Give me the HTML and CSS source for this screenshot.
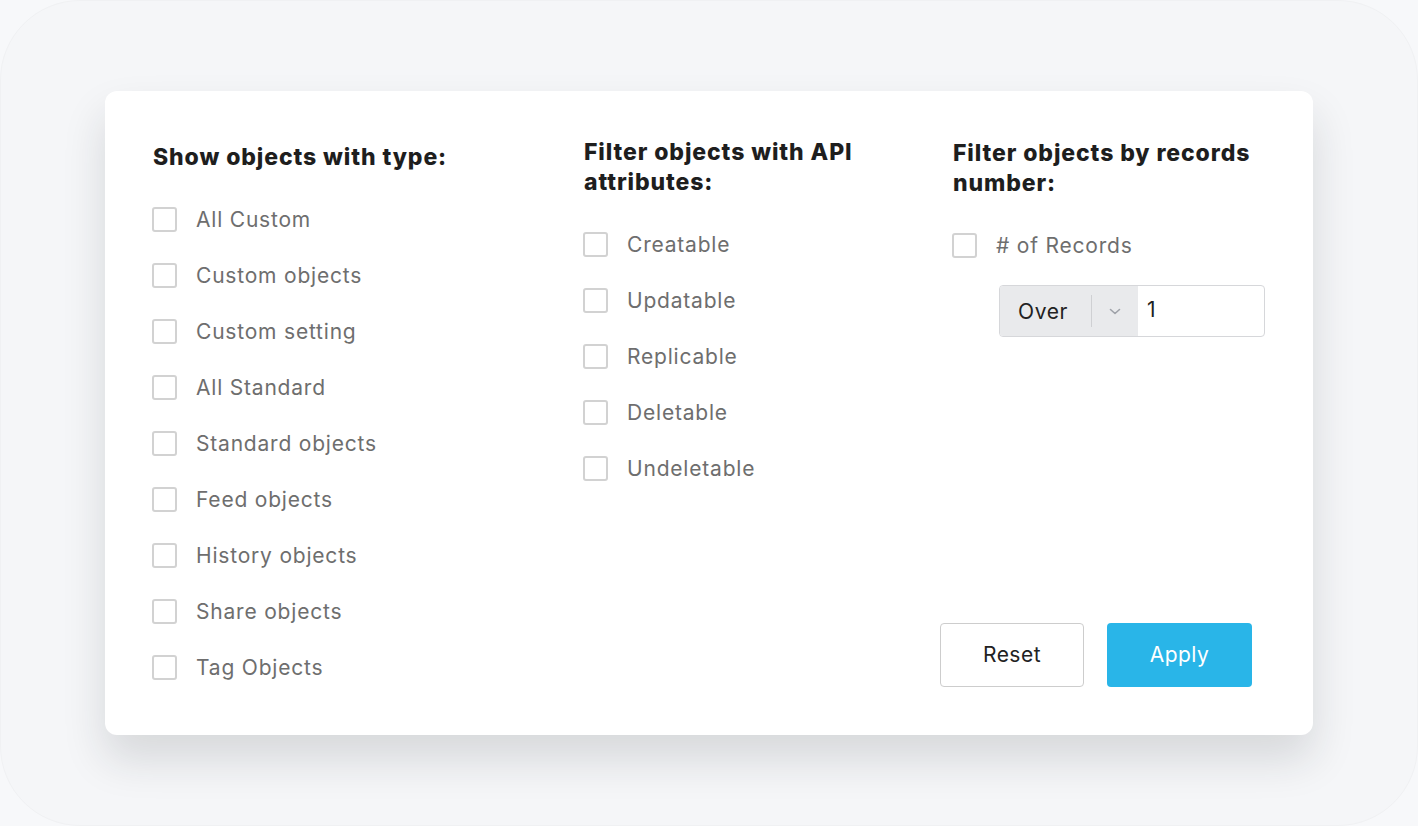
FILE: index.html
```html
<!DOCTYPE html>
<html lang="en">
<head>
  <meta charset="UTF-8" />
  <meta name="viewport" content="width=device-width, initial-scale=1.0" />
  <title>Object filters</title>
  <link rel="stylesheet" href="styles.css">
</head>
<body>
  <div class="frame">
    <div class="card">
      <div class="col col-type">
        <h3>Show objects with type:</h3>
        <ul class="checks">
          <li><span class="box"></span>All Custom</li>
          <li><span class="box"></span>Custom objects</li>
          <li><span class="box"></span>Custom setting</li>
          <li><span class="box"></span>All Standard</li>
          <li><span class="box"></span>Standard objects</li>
          <li><span class="box"></span>Feed objects</li>
          <li><span class="box"></span>History objects</li>
          <li><span class="box"></span>Share objects</li>
          <li><span class="box"></span>Tag Objects</li>
        </ul>
      </div>

      <div class="col col-api">
        <h3>Filter objects with API attributes:</h3>
        <ul class="checks">
          <li><span class="box"></span>Creatable</li>
          <li><span class="box"></span>Updatable</li>
          <li><span class="box"></span>Replicable</li>
          <li><span class="box"></span>Deletable</li>
          <li><span class="box"></span>Undeletable</li>
        </ul>
      </div>

      <div class="col col-records">
        <h3>Filter objects by records number:</h3>
        <ul class="checks">
          <li><span class="box"></span># of Records</li>
        </ul>
        <div class="range">
          <div class="range-op">
            <span class="op-text">Over</span>
            <span class="op-sep"></span>
            <svg class="op-caret" width="12" height="7" viewBox="0 0 12 7"><path d="M1.5 1.5l4.5 4 4.5-4" fill="none" stroke="#9fa2a9" stroke-width="1.6" stroke-linecap="round" stroke-linejoin="round"/></svg>
          </div>
          <div class="range-value">1</div>
        </div>
        <div class="actions">
          <button class="btn btn-reset">Reset</button>
          <button class="btn btn-apply">Apply</button>
        </div>
      </div>
    </div>
  </div>
</body>
</html>
```

FILE: styles.css
```css
* { box-sizing: border-box; }
body {
  margin: 0;
  background: #f7f8fa;
  font-family: Inter, "Open Sans", sans-serif;
  color: #1e1e1e;
}
.frame {
  width: 1418px;
  height: 826px;
  background: #f5f6f8;
  border: 1px solid #f0f1f3;
  border-radius: 80px;
  display: flex;
  align-items: center;
  justify-content: center;
}
.card {
  width: 1208px;
  height: 644px;
  background: #fff;
  border-radius: 12px;
  box-shadow: 0 24px 44px rgba(30, 32, 40, 0.14);
  padding: 46px 48px 48px;
  display: grid;
  grid-template-columns: 431px 369px 1fr;
}
.col { display: flex; flex-direction: column; }
.col-type { padding-top: 5px; }
.col-records { padding-top: 1px; }
h3 {
  margin: 0;
  font-size: 23px;
  line-height: 30px;
  font-weight: 800;
  letter-spacing: 0.9px;
}
.col-api h3 { width: 300px; }
.checks {
  list-style: none;
  margin: 31px 0 0;
  padding: 0;
  display: flex;
  flex-direction: column;
  gap: 24px;
}
.checks li {
  height: 32px;
  display: flex;
  align-items: center;
  gap: 19px;
  font-size: 21px;
  letter-spacing: 0.8px;
  color: #6e6e6e;
}
.box {
  width: 25px;
  height: 25px;
  margin-left: -1px;
  border: 2px solid #d2d2d2;
  border-radius: 3px;
  flex-shrink: 0;
}
.range {
  display: flex;
  width: 266px;
  height: 52px;
  margin: 24px 0 0 46px;
  border: 1px solid #d6d7da;
  border-radius: 4px;
  overflow: hidden;
  font-size: 21px;
  letter-spacing: 0.6px;
}
.range-op {
  width: 138px;
  background: #e9eaec;
  display: flex;
  align-items: center;
  padding-left: 18px;
  color: #222;
}
.op-sep {
  width: 1px;
  height: 32px;
  background: #cfd0d3;
  margin-left: auto;
}
.op-caret { margin: 0 17px 0 17px; }
.range-value {
  flex: 1;
  display: flex;
  align-items: center;
  padding-left: 9px;
  color: #222;
  padding-bottom: 4px;
}
.actions {
  margin: auto 13px 0 -13px;
  display: flex;
  gap: 23px;
}
.btn {
  width: 144px;
  height: 64px;
  border-radius: 4px;
  font-family: inherit;
  font-size: 21px;
  letter-spacing: 0.5px;
  padding-bottom: 3px;
  cursor: pointer;
}
.btn-reset {
  background: #fff;
  border: 1px solid #cdcdcd;
  color: #222;
}
.btn-apply {
  width: 145px;
  background: #29b5e8;
  border: none;
  color: #fff;
}
```
